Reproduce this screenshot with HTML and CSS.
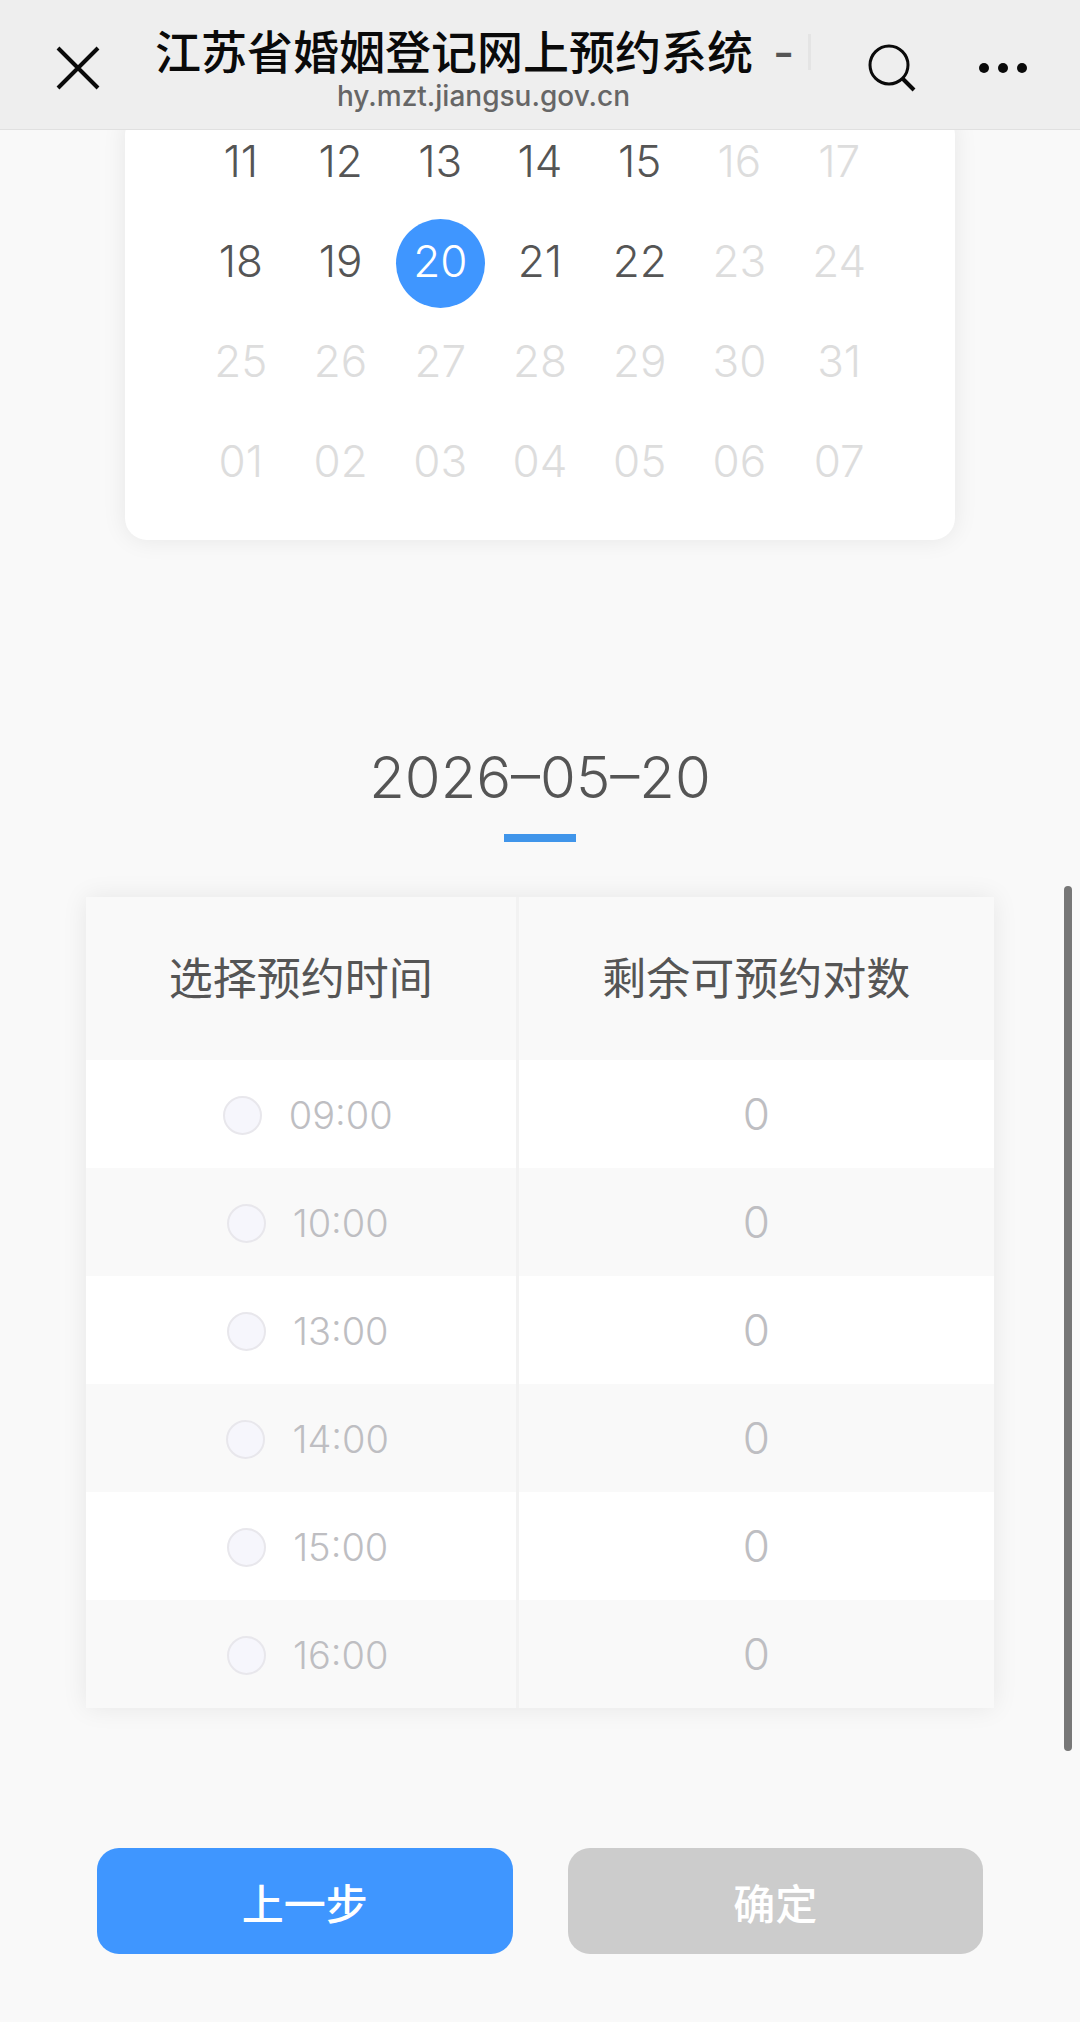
FILE: index.html
```html
<!DOCTYPE html>
<html lang="zh-CN">
<head>
<meta charset="utf-8">
<meta name="viewport" content="width=device-width, initial-scale=1">
<title>江苏省婚姻登记网上预约系统</title>
<link rel="stylesheet" href="styles.css">
</head>
<body>
<header class="topbar">
  <button class="icon-button" type="button" aria-label="关闭">
    <svg width="44" height="44" viewBox="0 0 44 44" fill="none" stroke="#0a0a0a" stroke-width="4"><path d="M2 2 42 42M42 2 2 42"/></svg>
  </button>
  <div class="heading">
    <h1 class="title">江苏省婚姻登记网上预约系统 <span class="title-fade">-</span></h1>
    <p class="address">hy.mzt.jiangsu.gov.cn</p>
  </div>
  <button class="icon-button" type="button" aria-label="搜索">
    <svg width="48" height="48" viewBox="0 0 48 48" fill="none" stroke="#0a0a0a" stroke-width="3"><circle cx="21" cy="21" r="19"/><path d="M34 34 46 46" stroke-width="4"/></svg>
  </button>
  <button class="icon-button" type="button" aria-label="更多">
    <svg width="50" height="12" viewBox="0 0 50 12" fill="#0a0a0a"><circle cx="6" cy="6" r="5"/><circle cx="25" cy="6" r="5"/><circle cx="44" cy="6" r="5"/></svg>
  </button>
</header>

<main class="page">
  <section class="calendar" aria-label="日期">
    <button class="day" type="button">11</button>
    <button class="day" type="button">12</button>
    <button class="day" type="button">13</button>
    <button class="day" type="button">14</button>
    <button class="day" type="button">15</button>
    <button class="day" type="button" disabled>16</button>
    <button class="day" type="button" disabled>17</button>
    <button class="day" type="button">18</button>
    <button class="day" type="button">19</button>
    <button class="day selected" type="button" aria-pressed="true"><span class="dot">20</span></button>
    <button class="day" type="button">21</button>
    <button class="day" type="button">22</button>
    <button class="day" type="button" disabled>23</button>
    <button class="day" type="button" disabled>24</button>
    <button class="day" type="button" disabled>25</button>
    <button class="day" type="button" disabled>26</button>
    <button class="day" type="button" disabled>27</button>
    <button class="day" type="button" disabled>28</button>
    <button class="day" type="button" disabled>29</button>
    <button class="day" type="button" disabled>30</button>
    <button class="day" type="button" disabled>31</button>
    <button class="day" type="button" disabled>01</button>
    <button class="day" type="button" disabled>02</button>
    <button class="day" type="button" disabled>03</button>
    <button class="day" type="button" disabled>04</button>
    <button class="day" type="button" disabled>05</button>
    <button class="day" type="button" disabled>06</button>
    <button class="day" type="button" disabled>07</button>
  </section>

  <h2 class="date">2026–05–20</h2>

  <table class="slots">
    <thead>
      <tr><th scope="col">选择预约时间</th><th scope="col">剩余可预约对数</th></tr>
    </thead>
    <tbody>
      <tr><td><label class="slot"><input type="radio" name="slot" disabled>09:00</label></td><td>0</td></tr>
      <tr><td><label class="slot"><input type="radio" name="slot" disabled>10:00</label></td><td>0</td></tr>
      <tr><td><label class="slot"><input type="radio" name="slot" disabled>13:00</label></td><td>0</td></tr>
      <tr><td><label class="slot"><input type="radio" name="slot" disabled>14:00</label></td><td>0</td></tr>
      <tr><td><label class="slot"><input type="radio" name="slot" disabled>15:00</label></td><td>0</td></tr>
      <tr><td><label class="slot"><input type="radio" name="slot" disabled>16:00</label></td><td>0</td></tr>
    </tbody>
  </table>

  <div class="actions">
    <button class="action back" type="button">上一步</button>
    <button class="action confirm" type="button" disabled>确定</button>
  </div>
</main>
<div class="scroll-thumb"></div>
</body>
</html>
```
FILE: styles.css
```css
* {
  box-sizing: border-box;
}

body {
  position: relative;
  margin: 0;
  min-height: 100vh;
  background: #f9f9f9;
  color: #555;
  font-family: Inter, "Noto Sans CJK SC", sans-serif;
}

button {
  padding: 0;
  border: 0;
  background: none;
  color: inherit;
  font: inherit;
}

/* Browser bar */
.topbar {
  position: relative;
  z-index: 1;
  display: flex;
  align-items: center;
  height: 130px;
  padding: 6px 52px 0 56px;
  border-bottom: 1px solid #e0e0e0;
  background: #eee;
}

.icon-button {
  display: flex;
}

.heading {
  flex: 1;
  display: flex;
  flex-direction: column;
  align-items: center;
  margin: 0 56px 0 55px;
}

.title {
  display: flex;
  align-self: stretch;
  align-items: center;
  gap: 20px;
  margin: 0;
  color: #0a0a0a;
  font-size: 46px;
  font-weight: 500;
  line-height: 56px;
  white-space: nowrap;
}

.title-fade {
  display: flex;
  align-items: center;
  gap: 14px;
  color: #555;
}

.title-fade::after {
  content: "";
  width: 3px;
  height: 36px;
  background: #e4e4e4;
}

.address {
  margin: 0;
  color: #666;
  font-size: 28px;
  font-weight: 500;
  line-height: 32px;
}

.icon-button + .icon-button {
  margin-left: 62px;
}

/* Calendar */
.calendar {
  display: grid;
  grid-template-columns: repeat(7, 1fr);
  margin: -17px 125px 0;
  padding: 0 66px 27px;
  border-radius: 22px;
  background: #fff;
  box-shadow: 0 0 24px rgba(0, 0, 0, 0.08);
}

.day {
  display: flex;
  align-items: center;
  justify-content: center;
  height: 100px;
  padding-bottom: 4px;
  font-size: 44px;
  font-weight: 350;
  line-height: 52px;
}

.day:disabled {
  color: #ddd;
  font-weight: 300;
}

.selected {
  padding-bottom: 0;
}

.dot {
  display: grid;
  place-items: center;
  width: 89px;
  height: 89px;
  padding-bottom: 4px;
  border-radius: 50%;
  background: #3f96ff;
  color: #fff;
}

/* Chosen date */
.date {
  display: flex;
  flex-direction: column;
  align-items: center;
  gap: 20px;
  margin: 200px 0 55px;
  font-size: 58px;
  font-weight: 350;
  line-height: 74px;
}

.date::after {
  content: "";
  width: 72px;
  height: 8px;
  background: #4095ea;
}

/* Time slots */
.page {
  padding-bottom: 68px;
}

.slots {
  width: calc(100% - 172px);
  margin: 0 86px;
  border-collapse: collapse;
  table-layout: fixed;
  background: #f9f9f9;
  box-shadow: 0 0 24px rgba(0, 0, 0, 0.08);
  text-align: center;
}

.slots th {
  height: 163px;
  padding: 0 0 6px;
  font-size: 44px;
  font-weight: 400;
}

.slots th:first-child {
  width: 431px;
}

.slots th:first-child,
.slots td:first-child {
  border-right: 3px solid #f2f2f2;
}

.slots td {
  height: 108px;
  padding: 0;
  color: #bebec2;
  font-size: 44px;
  font-weight: 300;
}

.slots tbody tr:nth-child(odd) {
  background: #fff;
}

.slot {
  display: flex;
  align-items: center;
  justify-content: center;
  gap: 27px;
  padding: 2px 0 0 14px;
  font-size: 38px;
}

.slot input {
  appearance: none;
  width: 39px;
  height: 39px;
  margin: 0;
  border: 2px solid #e8e7ec;
  border-radius: 50%;
  background: #f6f6fc;
}

/* Bottom buttons */
.actions {
  display: flex;
  gap: 55px;
  margin: 140px 97px 0;
}

.action {
  flex: 1;
  height: 106px;
  border-radius: 22px;
  color: #fff;
  font-size: 42px;
  font-weight: 500;
}

.back {
  background: #3f96ff;
}

.confirm {
  background: #ccc;
}

.scroll-thumb {
  position: absolute;
  top: 886px;
  right: 8px;
  width: 8px;
  height: 865px;
  border-radius: 4px;
  background: #777;
}
```
